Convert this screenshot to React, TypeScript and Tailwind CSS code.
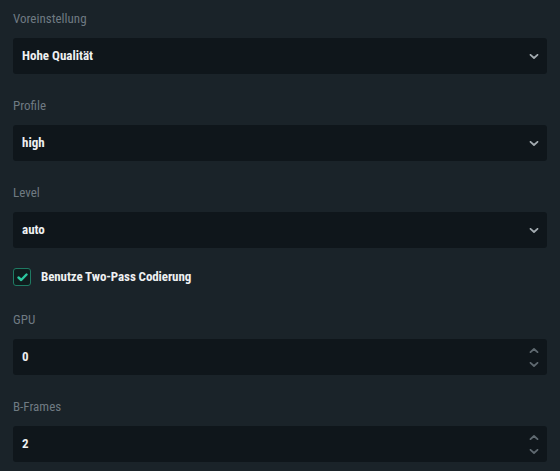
import React from "react";

const font = "font-['Roboto',sans-serif] [font-stretch:75%]";

function Chevron({ up = false, className = "" }: { up?: boolean; className?: string }) {
  return (
    <svg width="10" height="5" viewBox="0 0 10 5" className={className}>
      <path
        d={up ? "M1.5 4.2 L5 1 L8.5 4.2" : "M1.5 0.8 L5 4 L8.5 0.8"}
        fill="none"
        stroke="currentColor"
        strokeWidth="1.8"
        strokeLinecap="round"
        strokeLinejoin="round"
      />
    </svg>
  );
}

function Label({ children }: { children: React.ReactNode }) {
  return <div className="pt-[1px] text-[13px] leading-[16px] text-[#6f7a82]">{children}</div>;
}

function Select({ label, value }: { label: string; value: string }) {
  return (
    <div className="flex flex-col gap-[11px] mb-[23px]">
      <Label>{label}</Label>
      <div className="h-[36px] rounded-[3px] bg-[#0f161b] flex items-center justify-between pl-[9px] pr-[8px]">
        <span className="text-[13px] font-bold text-[#eef0f1]">{value}</span>
        <Chevron className="text-[#a3abb0]" />
      </div>
    </div>
  );
}

function NumberField({ label, value }: { label: string; value: string }) {
  return (
    <div className="flex flex-col gap-[11px] mb-[23px]">
      <Label>{label}</Label>
      <div className="h-[36px] rounded-[3px] bg-[#0f161b] flex items-center justify-between pl-[9px] pr-[8px]">
        <span className="text-[13px] font-bold text-[#eef0f1]">{value}</span>
        <div className="flex flex-col gap-[9px] text-[#5f6970]">
          <Chevron up />
          <Chevron />
        </div>
      </div>
    </div>
  );
}

export default function App() {
  return (
    <div className={`w-[560px] h-[471px] overflow-hidden bg-[#1a2329] px-[13px] pt-[10px] ${font}`}>
      <Select label="Voreinstellung" value="Hohe Qualität" />
      <Select label="Profile" value="high" />
      <div className="-mb-[3px]">
        <Select label="Level" value="auto" />
      </div>
      <div className="flex items-center gap-[10px] mb-[25px] h-[18px]">
        <div className="w-[18px] h-[18px] rounded-[3px] border border-[#1f7a63] bg-[#0f1c1d] flex items-center justify-center">
          <svg width="11" height="9" viewBox="0 0 11 9">
            <path d="M1.5 4.5 L4.2 7 L9.5 1.5" fill="none" stroke="#2cc79f" strokeWidth="2.4" strokeLinecap="round" strokeLinejoin="round" />
          </svg>
        </div>
        <span className="text-[13px] font-bold tracking-[-0.1px] text-[#eef0f1]">Benutze Two-Pass Codierung</span>
      </div>
      <NumberField label="GPU" value="0" />
      <NumberField label="B-Frames" value="2" />
    </div>
  );
}
